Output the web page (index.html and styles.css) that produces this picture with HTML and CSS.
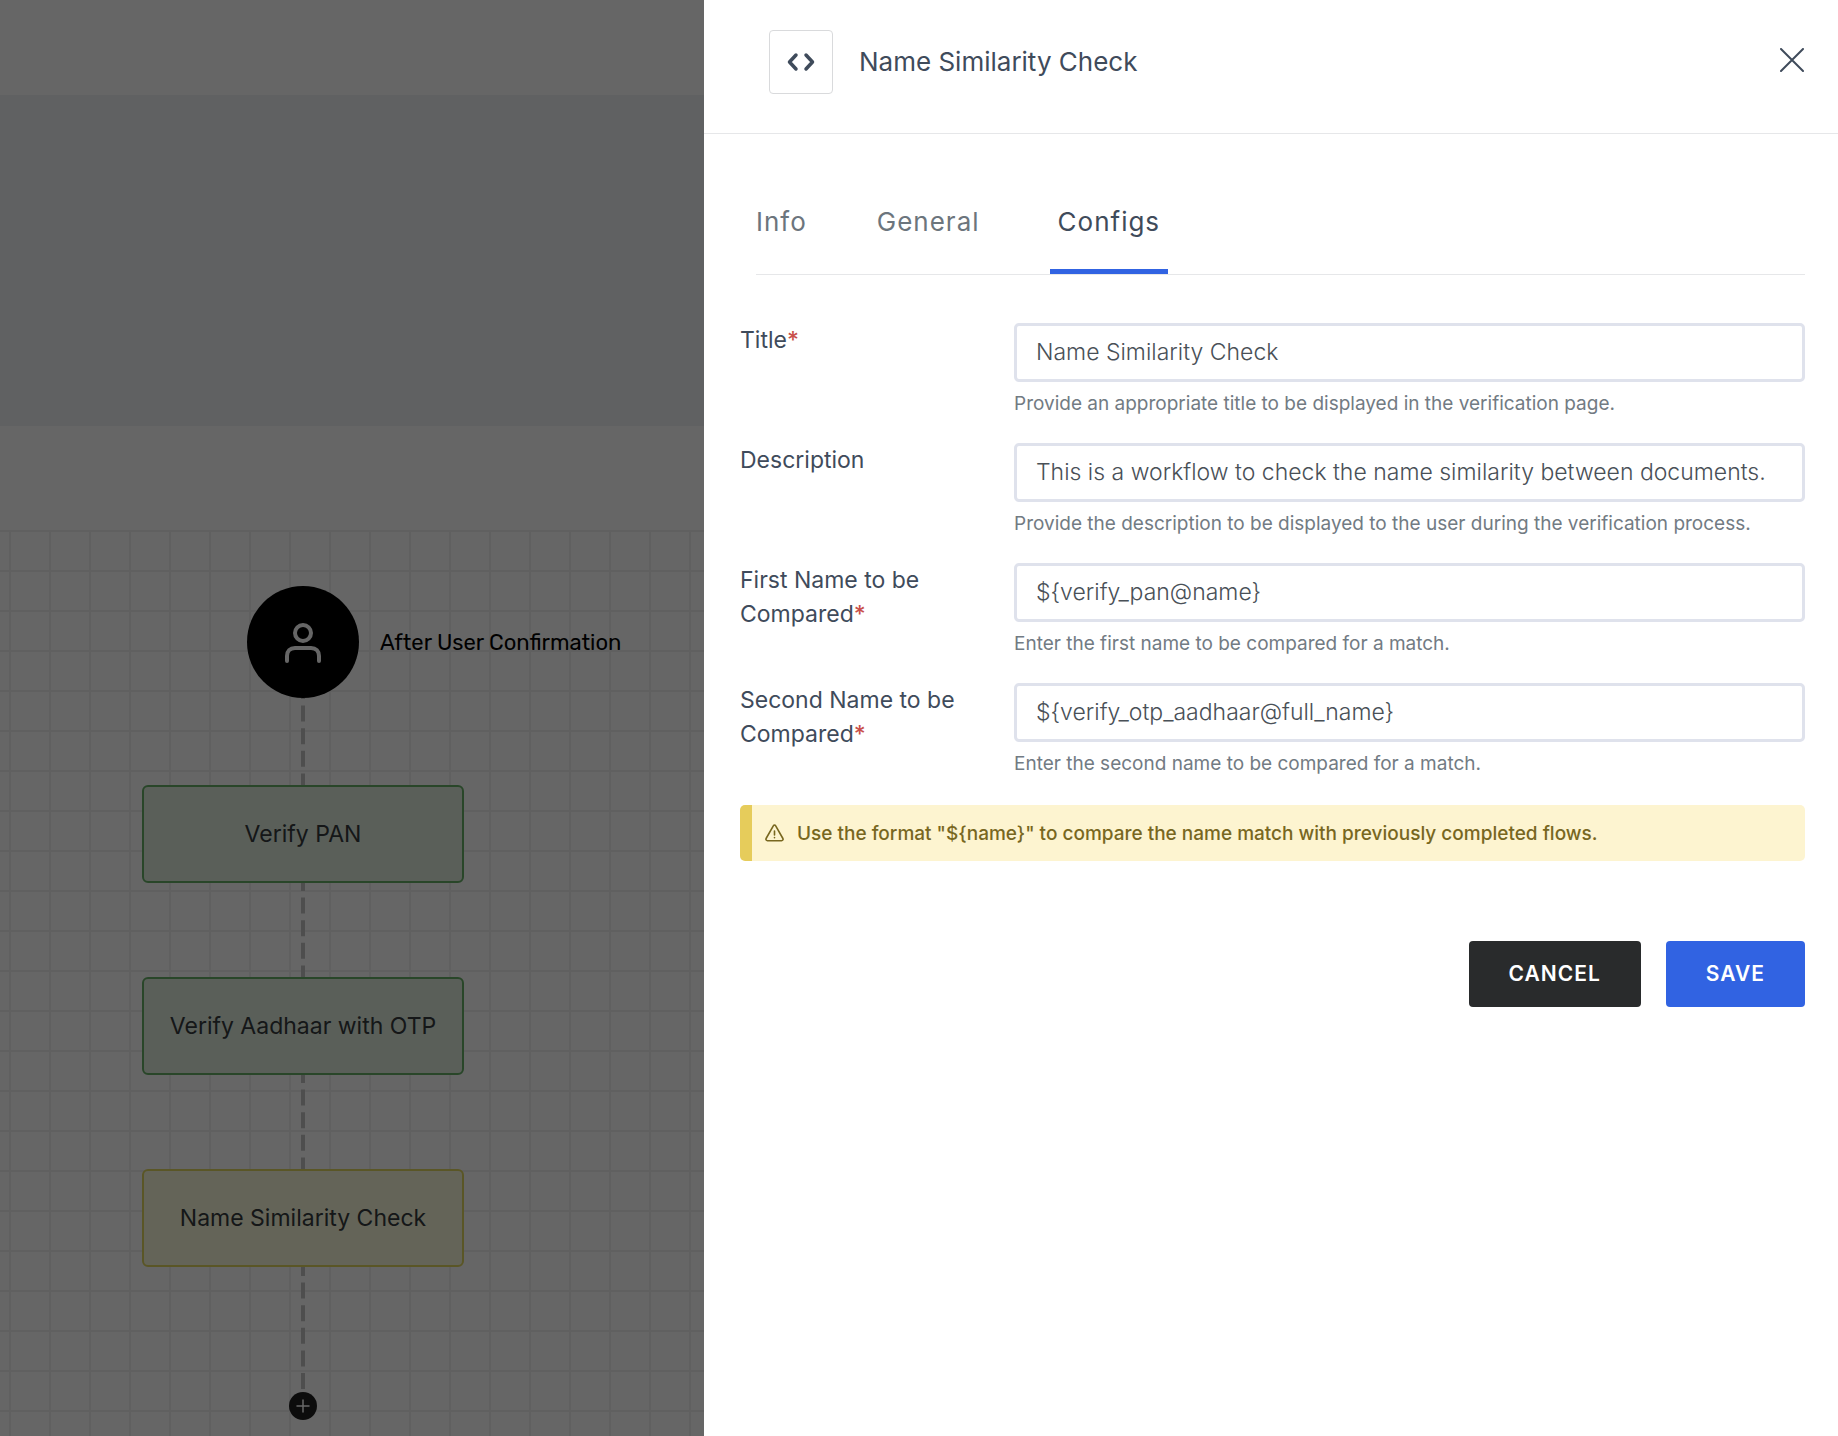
FILE: index.html
```html
<!DOCTYPE html>
<html lang="en">
<head>
<meta charset="utf-8">
<meta name="viewport" content="width=device-width, initial-scale=1">
<title>Name Similarity Check</title>
<link rel="stylesheet" href="styles.css">
</head>
<body>
<main class="workspace">
  <div class="topbar"></div>
  <div class="band"></div>
  <div class="toolbar"></div>
  <div class="canvas">
    <div class="flow">
      <div class="start">
        <svg class="start-icon" width="36" height="42" viewBox="0 -2 36 42" fill="none" stroke="#fff" stroke-width="4" stroke-linecap="round" stroke-linejoin="round" aria-hidden="true"><circle cx="18" cy="10" r="8"/><path d="M2 38v-5c0-5 3-8 8-8h16c5 0 8 3 8 8v5"/></svg>
        <span class="start-label">After User Confirmation</span>
      </div>
      <svg class="link" width="4" height="87" aria-hidden="true"><path d="M2 0V87" stroke-dasharray="16 6.6" stroke-dashoffset="15"/></svg>
      <div class="node node-done">Verify PAN</div>
      <svg class="link" width="4" height="94" aria-hidden="true"><path d="M2 0V94" stroke-dasharray="16 6.6" stroke-dashoffset="8"/></svg>
      <div class="node node-done">Verify Aadhaar with OTP</div>
      <svg class="link" width="4" height="94" aria-hidden="true"><path d="M2 0V94" stroke-dasharray="16 6.6" stroke-dashoffset="8"/></svg>
      <div class="node node-current">Name Similarity Check</div>
      <svg class="link" width="4" height="125" aria-hidden="true"><path d="M2 0V125" stroke-dasharray="16 6.6" stroke-dashoffset="7"/></svg>
      <button class="add" type="button" aria-label="Add step">
        <svg width="14" height="14" viewBox="0 0 14 14" stroke="#fff" stroke-width="1.5" stroke-linecap="round" aria-hidden="true"><path d="M7 1v12M1 7h12"/></svg>
      </button>
    </div>
  </div>
</main>

<div class="scrim">
  <section class="drawer" role="dialog" aria-labelledby="drawer-title">
    <header class="drawer-head">
      <span class="badge">
        <svg width="28" height="20" viewBox="0 0 28 20" fill="none" stroke="currentColor" stroke-width="3.5" stroke-linecap="round" stroke-linejoin="round" aria-hidden="true"><path d="M9 3l-6.500 7 6.500 7M19 3l6.500 7-6.500 7"/></svg>
      </span>
      <h1 class="drawer-title" id="drawer-title">Name Similarity Check</h1>
      <button class="close" type="button" aria-label="Close">
        <svg width="24" height="24" viewBox="0 0 24 24" stroke="currentColor" stroke-width="2" stroke-linecap="round" aria-hidden="true"><path d="M1 1l22 22M23 1L1 23"/></svg>
      </button>
    </header>

    <nav class="tabs" role="tablist">
      <button class="tab tab-first" type="button" role="tab">Info</button>
      <button class="tab" type="button" role="tab">General</button>
      <button class="tab tab-active" type="button" role="tab" aria-selected="true">Configs</button>
    </nav>

    <form class="form">
      <div class="row">
        <label class="label" for="title">Title<span class="req">*</span></label>
        <div class="field">
          <input class="input" id="title" type="text" value="Name Similarity Check">
          <p class="hint">Provide an appropriate title to be displayed in the verification page.</p>
        </div>
      </div>
      <div class="row">
        <label class="label" for="description">Description</label>
        <div class="field">
          <input class="input" id="description" type="text" value="This is a workflow to check the name similarity between documents.">
          <p class="hint">Provide the description to be displayed to the user during the verification process.</p>
        </div>
      </div>
      <div class="row">
        <label class="label" for="first">First Name to be Compared<span class="req">*</span></label>
        <div class="field">
          <input class="input" id="first" type="text" value="${verify_pan@name}">
          <p class="hint">Enter the first name to be compared for a match.</p>
        </div>
      </div>
      <div class="row">
        <label class="label" for="second">Second Name to be Compared<span class="req">*</span></label>
        <div class="field">
          <input class="input" id="second" type="text" value="${verify_otp_aadhaar@full_name}">
          <p class="hint">Enter the second name to be compared for a match.</p>
        </div>
      </div>

      <div class="alert" role="note">
        <svg width="19" height="18" viewBox="0 0 19 18" fill="none" stroke="currentColor" stroke-width="1.6" stroke-linecap="round" stroke-linejoin="round" aria-hidden="true"><path d="M8.300 1.800L1.100 14.500c-.5 1 .1 2.200 1.300 2.200h14.200c1.200 0 1.800-1.200 1.300-2.200L10.700 1.800c-.6-1-1.800-1-2.400 0z"/><path d="M9.500 7v4M9.500 13.600v.1"/></svg>
        <span>Use the format "${name}" to compare the name match with previously completed flows.</span>
      </div>

      <div class="actions">
        <button class="btn btn-dark" type="button">CANCEL</button>
        <button class="btn btn-primary" type="submit">SAVE</button>
      </div>
    </form>
  </section>
</div>
</body>
</html>
```

FILE: styles.css
```css
* { box-sizing: border-box; }

body {
  margin: 0;
  background: #fff;
  color: #3f4b5b;
  font-family: Inter, "Liberation Sans", sans-serif;
  font-size: 23px;
}

button { font: inherit; border: 0; cursor: pointer; }

/* Workspace behind the drawer */
.workspace {
  display: flex;
  flex-direction: column;
  height: 100vh;
  overflow: hidden;
}
.topbar { flex: none; height: 95px; }
.band { flex: none; height: 331px; background: #f0f2f5; }
.toolbar { flex: none; height: 104px; }
.canvas {
  flex: 1;
  padding: 56px 142px 0;
  background-image:
    linear-gradient(#f0f0f0 2px, transparent 2px),
    linear-gradient(90deg, #f0f0f0 2px, transparent 2px);
  background-size: 40px 40px;
  background-position: 9px 0;
}
.flow {
  display: flex;
  flex-direction: column;
  align-items: center;
  width: 322px;
}
.start {
  position: relative;
  display: flex;
  align-items: center;
  justify-content: center;
  width: 112px;
  height: 112px;
  border-radius: 50%;
  background: #000;
}
.start-label {
  position: absolute;
  left: 133px;
  color: #000;
  font-family: Rubik, Inter, "Liberation Sans", sans-serif;
  font-size: 22px;
  font-weight: 450;
  white-space: nowrap;
}
.link { display: block; stroke: #c3c3c3; stroke-width: 4; }
.node {
  display: flex;
  align-items: center;
  justify-content: center;
  width: 322px;
  height: 98px;
  border: 2px solid;
  border-radius: 6px;
  color: #353a3d;
}
.node-done { background: #e0eddf; border-color: #68b068; }
.node-current { background: #fafadc; border-color: #e0d660; }
.add {
  display: flex;
  align-items: center;
  justify-content: center;
  width: 28px;
  height: 28px;
  padding: 0;
  border-radius: 50%;
  background: #202020;
}

/* Drawer */
.scrim {
  position: fixed;
  inset: 0;
  display: flex;
  justify-content: flex-end;
  background: rgba(0, 0, 0, .6);
}
.drawer {
  width: calc(100% - 704px);
  min-width: 640px;
  overflow: auto;
  background: #fff;
}
.drawer-head {
  display: flex;
  align-items: center;
  height: 134px;
  padding: 0 33px 10px 65px;
  border-bottom: 1px solid #e6e7e9;
}
.badge {
  display: flex;
  align-items: center;
  justify-content: center;
  width: 64px;
  height: 64px;
  border: 1px solid #d9dadc;
  border-radius: 4px;
}
.drawer-title {
  flex: 1;
  margin: 0 0 0 26px;
  font-size: 26px;
  font-weight: 400;
}
.close {
  display: flex;
  padding: 0 1px 4px 0;
  background: none;
  color: #3f4b5b;
}

.tabs {
  display: flex;
  align-items: flex-end;
  gap: 62px;
  height: 141px;
  margin: 0 33px 48px 52px;
  border-bottom: 1px solid #e6e7e9;
}
.tab {
  height: 100px;
  padding: 0 8px;
  border-bottom: 5px solid transparent;
  background: none;
  color: #6c757d;
  font-size: 26px;
  letter-spacing: 1px;
}
.tab-first { padding: 0; }
.tab-active { border-bottom-color: #3163e2; color: #3f4b5b; }

.form { padding: 0 33px 32px 36px; }
.row {
  display: grid;
  grid-template-columns: 240px 1fr;
  column-gap: 34px;
  min-height: 120px;
}
.label { line-height: 34px; }
.req { color: #c9504a; font-weight: 500; }
.input {
  display: block;
  width: 100%;
  height: 59px;
  padding: 0 19px 1px;
  border: 3px solid #dfe2ec;
  border-radius: 5px;
  background: #fff;
  color: #495057;
  font: inherit;
  font-weight: 350;
}
.hint {
  margin: 8px 0 0;
  color: #727b83;
  font-size: 19px;
  line-height: 28px;
}
.alert {
  display: flex;
  align-items: center;
  gap: 13px;
  min-height: 56px;
  margin-top: 2px;
  padding-left: 13px;
  border-left: 12px solid #e6cc5b;
  border-radius: 5px;
  background: #fdf4d0;
  color: #78671f;
  font-size: 19px;
  font-weight: 500;
}
.actions {
  display: flex;
  justify-content: flex-end;
  gap: 25px;
  margin-top: 80px;
}
.btn {
  height: 66px;
  padding: 0 40px 1px;
  border-radius: 4px;
  color: #fff;
  font-size: 21px;
  font-weight: 600;
  letter-spacing: 1px;
}
.btn-dark { background: #292b2c; }
.btn-primary { background: #3163e2; }
```
